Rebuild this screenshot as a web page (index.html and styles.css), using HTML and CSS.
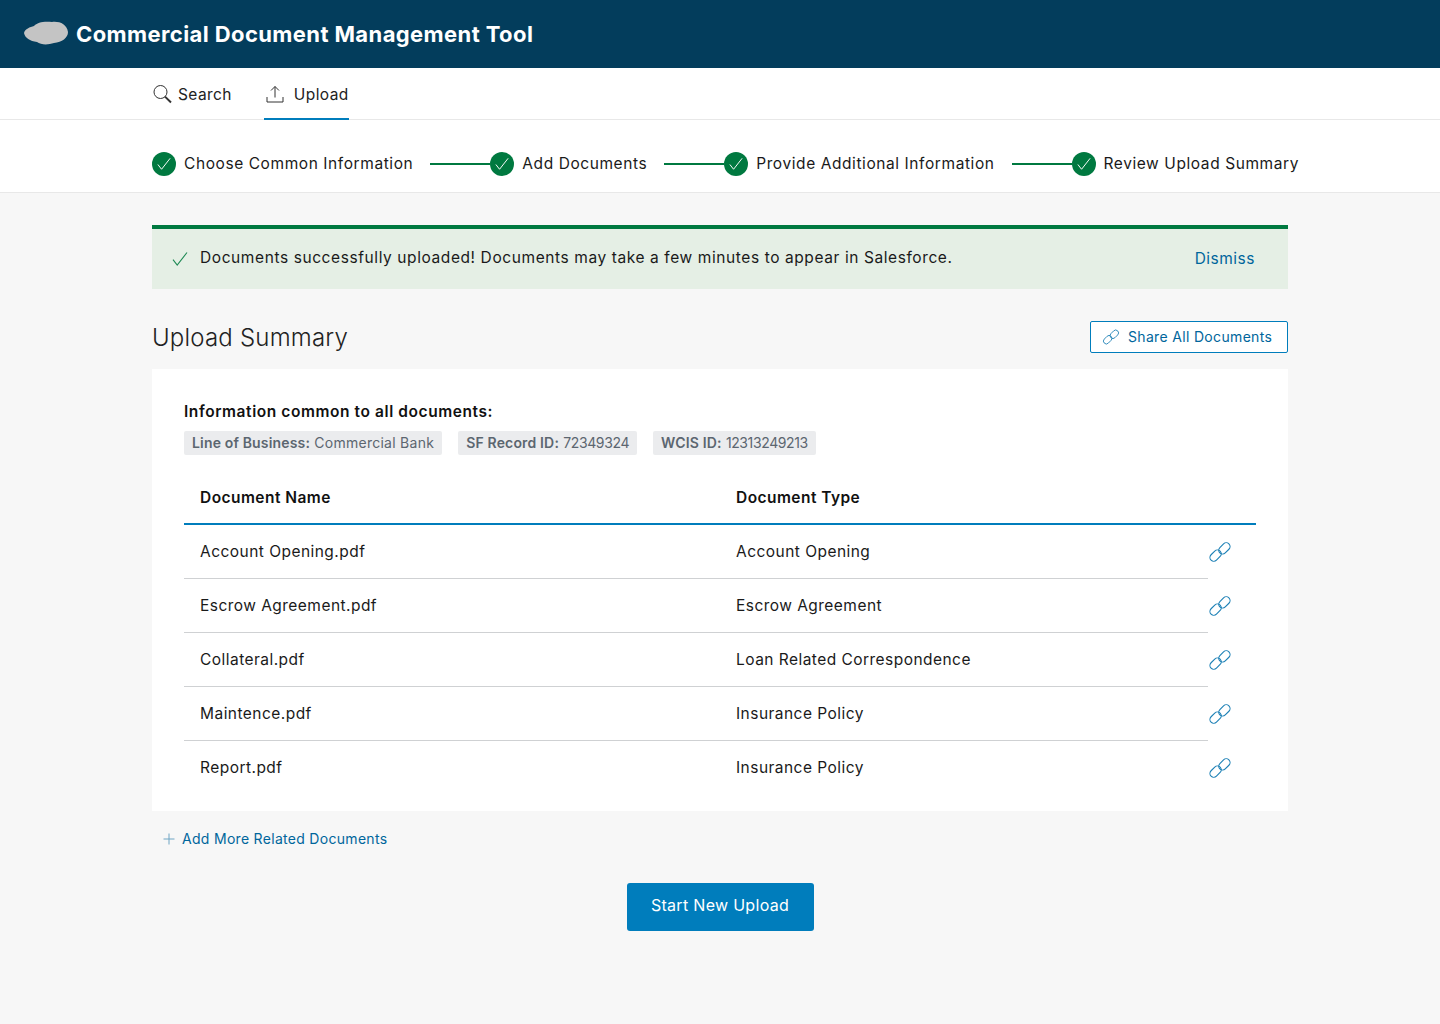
FILE: index.html
```html
<!DOCTYPE html>
<html lang="en">
<head>
<meta charset="utf-8">
<title>Commercial Document Management Tool</title>
<link rel="stylesheet" href="styles.css">
</head>
<body>
<svg class="defs" width="0" height="0" aria-hidden="true">
  <symbol id="link" viewBox="0 0 24 24">
    <g fill="none" stroke="currentColor" stroke-width="1.1">
      <rect x="-6.4" y="-3.8" width="12.8" height="7.6" rx="3.8" transform="translate(7.6 15.6) rotate(-45)"/>
      <rect x="-6.4" y="-3.8" width="12.8" height="7.6" rx="3.8" transform="translate(16.4 8.4) rotate(-45)"/>
    </g>
  </symbol>
  <symbol id="check" viewBox="0 0 16 16">
    <path d="M1 8.6 5.2 14 15 1.5" fill="none" stroke="currentColor" stroke-width="1.1"/>
  </symbol>
</svg>
<header class="topbar">
  <svg class="logo" width="44" height="24" viewBox="0 0 44 24"><path d="M0 12C1 8 6 6 10 5 13 1 21 0 28 1 35 0 43 3 44 11 44 17 38 21 30 22 24 24 17 24 13 21 6 20 1 17 0 12Z" fill="#c4c4c4"/></svg>
  <h1 class="apptitle">Commercial Document Management Tool</h1>
</header>
<nav class="tabs">
  <a class="tab">
    <svg width="20" height="20" viewBox="0 0 20 20" fill="none" stroke="#333" stroke-width="1"><circle cx="8.5" cy="8" r="6.5"/><path d="M13 12.6 19 18.5" stroke-width="2"/></svg>
    <span>Search</span>
  </a>
  <a class="tab tab-active">
    <svg width="18" height="18" viewBox="0 0 18 18" fill="none" stroke="#333" stroke-width="1"><path d="M9 12.5V1.5M5 5.5 9 1.5 13 5.5M1 12V17H17V12"/></svg>
    <span>Upload</span>
  </a>
</nav>
<section class="stepper">
  <div class="step"><span class="dot"><svg width="14" height="14"><use href="#check"/></svg></span><span>Choose Common Information</span></div>
  <div class="line"></div>
  <div class="step"><span class="dot"><svg width="14" height="14"><use href="#check"/></svg></span><span>Add Documents</span></div>
  <div class="line"></div>
  <div class="step"><span class="dot"><svg width="14" height="14"><use href="#check"/></svg></span><span>Provide Additional Information</span></div>
  <div class="line"></div>
  <div class="step"><span class="dot"><svg width="14" height="14"><use href="#check"/></svg></span><span>Review Upload Summary</span></div>
</section>
<main class="content">
  <div class="alert">
    <svg class="alert-check" width="16" height="16"><use href="#check"/></svg>
    <p class="alert-text">Documents successfully uploaded! Documents may take a few minutes to appear in Salesforce.</p>
    <a class="dismiss">Dismiss</a>
  </div>
  <div class="summary-head">
    <h2 class="summary-title">Upload Summary</h2>
    <button class="share-all"><svg width="18" height="18"><use href="#link"/></svg><span>Share All Documents</span></button>
  </div>
  <section class="card">
    <h3 class="common">Information common to all documents:</h3>
    <div class="chips">
      <span class="chip"><b>Line of Business:</b> Commercial Bank</span>
      <span class="chip"><b>SF Record ID:</b> <span class="num">72349324</span></span>
      <span class="chip"><b>WCIS ID:</b> <span class="num">12313249213</span></span>
    </div>
    <div class="thead"><span>Document Name</span><span>Document Type</span></div>
    <div class="row"><div class="cells"><span>Account Opening.pdf</span><span>Account Opening</span></div><svg class="rowlink" width="24" height="24"><use href="#link"/></svg></div>
    <div class="row"><div class="cells"><span>Escrow Agreement.pdf</span><span>Escrow Agreement</span></div><svg class="rowlink" width="24" height="24"><use href="#link"/></svg></div>
    <div class="row"><div class="cells"><span>Collateral.pdf</span><span>Loan Related Correspondence</span></div><svg class="rowlink" width="24" height="24"><use href="#link"/></svg></div>
    <div class="row"><div class="cells"><span>Maintence.pdf</span><span>Insurance Policy</span></div><svg class="rowlink" width="24" height="24"><use href="#link"/></svg></div>
    <div class="row row-last"><div class="cells"><span>Report.pdf</span><span>Insurance Policy</span></div><svg class="rowlink" width="24" height="24"><use href="#link"/></svg></div>
  </section>
  <a class="addmore"><svg width="12" height="12" viewBox="0 0 12 12" stroke="#6fa5c4" stroke-width="1"><path d="M6 .5V11.5M.5 6H11.5"/></svg><span>Add More Related Documents</span></a>
  <div class="actions"><button class="primary">Start New Upload</button></div>
</main>
</body>
</html>
```
FILE: styles.css
```css
* { box-sizing: border-box; }
html, body { margin: 0; padding: 0; }
body {
  height: 1024px;
  overflow: hidden;
  background: #f7f7f7;
  color: #1a1a1a;
  font-family: "Inter", "Open Sans", sans-serif;
  font-size: 15.5px;
  letter-spacing: 0.46px;
}
.defs { position: absolute; }
.topbar {
  height: 68px;
  background: #033d5c;
  display: flex;
  align-items: center;
  padding-left: 24px;
  gap: 8px;
}
.logo { margin-top: -2px; }
.apptitle { margin: 0; color: #fff; font-size: 22px; font-weight: 700; letter-spacing: 0.4px; }
.tabs {
  height: 52px;
  background: #fff;
  border-bottom: 1px solid #e8e8e8;
  display: flex;
  align-items: flex-start;
  padding-left: 152px;
  gap: 32px;
}
.tab { display: flex; align-items: center; gap: 6px; height: 52px; color: #222; letter-spacing: 0.4px; }
.tab-active { border-bottom: 2px solid #007dbc; padding: 2px 0 0 2px; gap: 10px; }
.stepper {
  height: 73px;
  background: #fff;
  border-bottom: 1px solid #e8e8e8;
  display: flex;
  align-items: center;
  padding: 15px 0 0 152px;
  letter-spacing: 0.58px;
  white-space: nowrap;
}
.step { display: flex; align-items: center; gap: 8px; }
.dot { width: 24px; height: 24px; border-radius: 50%; background: #007940; color: #fff; display: flex; align-items: center; justify-content: center; }
.line { height: 2px; width: 60px; margin-left: 17px; background: #007940; }
.content { width: 1136px; margin: 32px auto 0; }
.alert {
  height: 64px;
  background: #e5efe5;
  border-top: 4px solid #007940;
  display: flex;
  align-items: center;
  padding: 0 33px 0 20px;
}
.alert-check { color: #1f8a55; }
.alert-text { margin: 0 0 4px 12px; flex: 1; letter-spacing: 0.59px; }
.dismiss { color: #00669c; letter-spacing: 0.5px; margin-bottom: 1px; }
.summary-head { display: flex; justify-content: space-between; align-items: center; height: 80px; padding-top: 16px; }
.summary-title { margin: 0; font-size: 24px; font-weight: 300; letter-spacing: 0.2px; color: #222; }
.share-all {
  width: 198px;
  height: 32px;
  background: #fff;
  border: 1px solid #007dbc;
  border-radius: 2px;
  color: #00669c;
  font: inherit;
  font-size: 14px;
  letter-spacing: 0.33px;
  display: flex;
  align-items: center;
  padding: 0 0 0 11px;
  gap: 8px;
}
.share-all span { margin-top: -1px; }
.share-all svg, .rowlink { color: #1a7fb5; }
.card { height: 442px; background: #fff; padding: 33px 32px 0; }
.common { margin: 0; font-size: 15.5px; font-weight: 600; line-height: 20px; color: #111; letter-spacing: 0.58px; }
.chips { display: flex; gap: 16px; margin-top: 9px; }
.chip { height: 24px; line-height: 24px; padding: 0 8px; background: #ebecee; border-radius: 2px; font-size: 14px; color: #5c6670; letter-spacing: 0.27px; }
.chip b { font-weight: 600; letter-spacing: 0.16px; }
.num { letter-spacing: -0.38px; }
.thead { display: grid; grid-template-columns: 536px 1fr; height: 70px; padding: 33px 0 0 16px; border-bottom: 2px solid #007dbc; font-weight: 600; color: #111; letter-spacing: 0.45px; }
.row { display: flex; height: 54px; align-items: center; }
.cells { width: 1024px; height: 54px; display: grid; grid-template-columns: 536px 1fr; align-items: center; padding-left: 16px; border-bottom: 1px solid #cfd1d3; }
.row-last .cells { border-bottom: 0; padding-bottom: 1px; }
.addmore { display: flex; align-items: center; gap: 7px; height: 56px; padding-left: 11px; font-size: 14px; letter-spacing: 0.3px; color: #00669c; }
.addmore span { margin-top: -2px; }
.actions { display: flex; justify-content: center; margin-top: 16px; }
.primary { width: 187px; height: 48px; border: 0; border-radius: 3px; background: #007dbc; color: #fff; font: inherit; font-size: 16px; letter-spacing: 0.3px; padding-bottom: 5px; }
```
